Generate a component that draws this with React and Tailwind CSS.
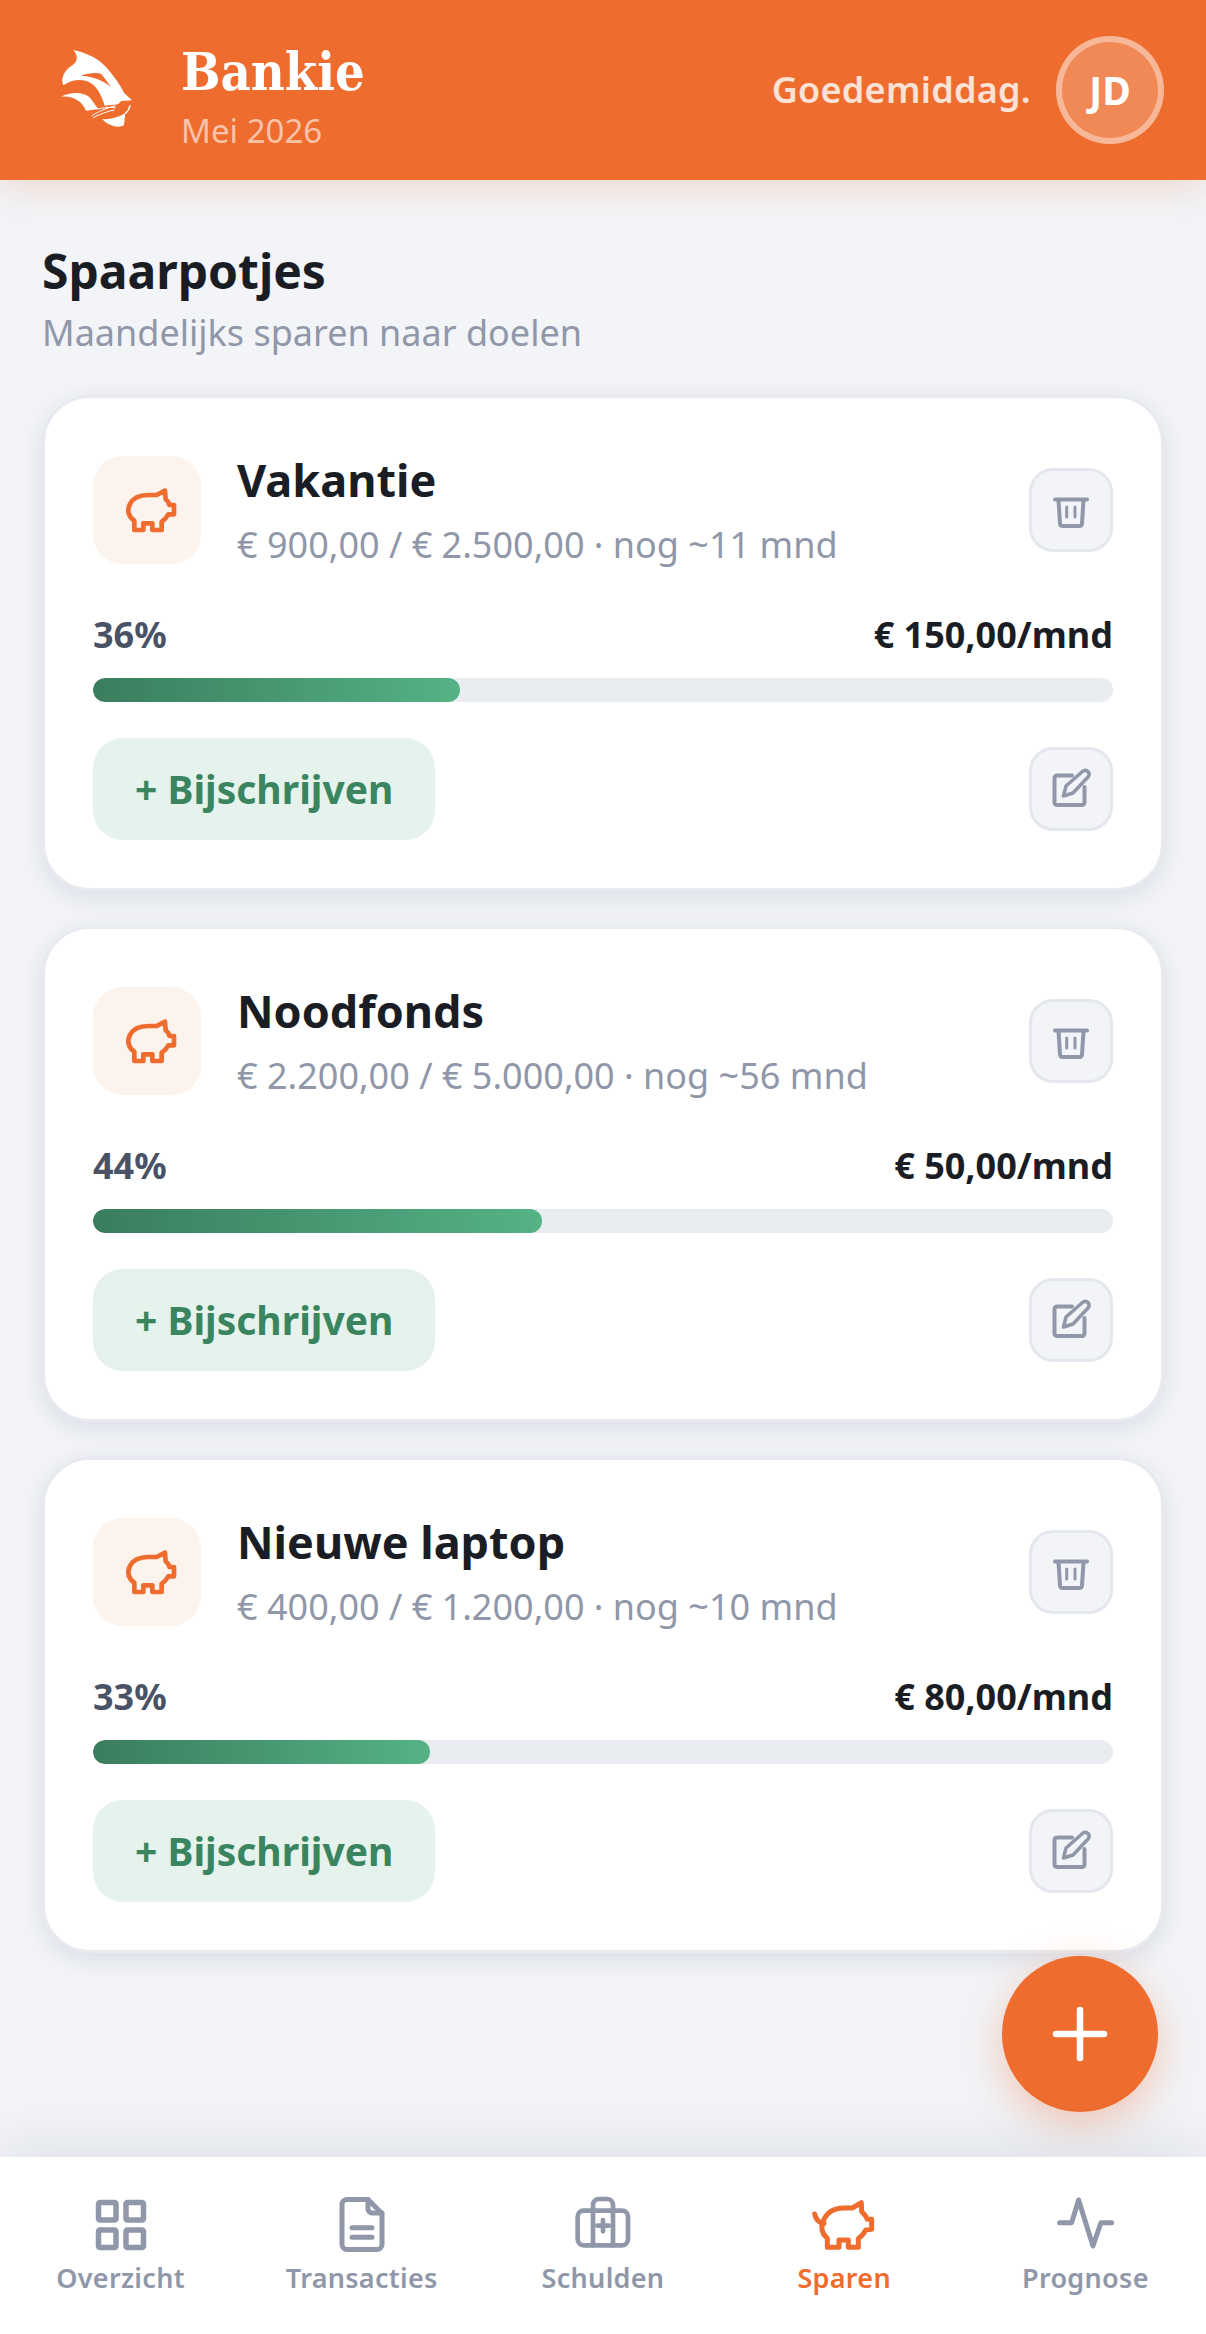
const orange = 'text-[#ee6c2d]';

const potjes = [
  { name: 'Vakantie', detail: '€ 900,00 / € 2.500,00 · nog ~11 mnd', pct: 36, monthly: '€ 150,00/mnd' },
  { name: 'Noodfonds', detail: '€ 2.200,00 / € 5.000,00 · nog ~56 mnd', pct: 44, monthly: '€ 50,00/mnd' },
  { name: 'Nieuwe laptop', detail: '€ 400,00 / € 1.200,00 · nog ~10 mnd', pct: 33, monthly: '€ 80,00/mnd' },
];

function Logo() {
  return (
    <svg width="80" height="90" viewBox="0 0 240 270" className="shrink-0">
      <path fill="#fff" d="M52 15 C85 22 115 35 135 52 C165 80 190 115 205 145 L228 166 L196 168 L186 178 L146 182 C138 155 125 128 105 115 C82 100 50 102 22 121 C15 105 20 85 38 68 C62 55 72 38 52 15 Z" />
      <path fill="#ee6c2d" d="M75 92 C95 84 120 82 135 86 L146 100 L165 126 C145 108 115 95 75 92 Z" />
      <path fill="#fff" d="M15 155 C45 140 80 140 100 156 C112 170 120 185 128 192 L90 197 C80 175 60 152 15 155 Z" />
      <path fill="#fff" d="M138 222 C160 225 185 218 208 205 L204 240 C190 250 160 245 138 222 Z" />
      <path fill="none" stroke="#fff" strokeWidth="3" strokeLinecap="round" d="M108 212 C125 200 150 190 178 182 M112 218 C130 208 155 198 175 195 M125 192 C140 188 160 186 178 188" />
      <path fill="none" stroke="#fff" strokeWidth="4" strokeLinecap="round" d="M222 182 C220 192 215 200 208 205" />
    </svg>
  );
}

function CardPig() {
  return (
    <svg width="70" height="60" viewBox="-9 0 210 180" fill="none" stroke="currentColor" strokeWidth="14" strokeLinejoin="round" strokeLinecap="round">
      <path d="M58 150 L58 122 C40 110 35 90 45 72 C55 52 75 45 100 45 L125 45 L150 32 L152 58 C158 62 162 68 163 75 L177 75 L177 103 L160 103 C155 112 148 120 140 125 L140 150 L112 150 L112 130 L85 130 L85 150 Z" />
    </svg>
  );
}

function TrashIcon() {
  return (
    <svg width="48" height="48" viewBox="0 0 48 48" fill="none" stroke="#8f97a8" strokeLinecap="round" strokeLinejoin="round">
      <path strokeWidth="4" d="M8 13.5 H40" />
      <path strokeWidth="4" d="M11.5 14 L13 37.5 a2.5 2.5 0 0 0 2.5 2.5 H32.5 a2.5 2.5 0 0 0 2.5 -2.5 L36.5 14" />
      <path strokeWidth="3" d="M19.7 21 V31 M28 21 V31" />
    </svg>
  );
}

function EditIcon() {
  return (
    <svg width="48" height="48" viewBox="0 0 48 48" fill="none" stroke="#8f97a8" strokeLinecap="round" strokeLinejoin="round">
      <path strokeWidth="4" d="M25 10.5 H10 a2.5 2.5 0 0 0 -2.5 2.5 V37.5 a2.5 2.5 0 0 0 2.5 2.5 H35 a2.5 2.5 0 0 0 2.5 -2.5 V22" />
      <path strokeWidth="3.5" d="M16.5 31 L19 21 L36 6 Q39 4.5 41 6.5 Q43 8.5 41.5 11.5 L26 28 Z" />
    </svg>
  );
}

function SquareButton({ children }) {
  return (
    <button className="w-[84px] h-[84px] shrink-0 flex items-center justify-center rounded-[24px] border-[3px] border-[#e5e7ee] bg-[#f2f4f8]">
      {children}
    </button>
  );
}

function PotCard({ name, detail, pct, monthly }) {
  return (
    <div className="rounded-[48px] border-[3px] border-[#e8eaf0] bg-white px-[48px] pt-[52px] pb-[48px] shadow-[0_6px_24px_rgba(30,40,70,0.11)]">
      <div className="flex items-center gap-[36px]">
        <div className={`w-[108px] h-[108px] shrink-0 flex items-center justify-center rounded-[30px] bg-[#fcf3ec] ${orange}`}>
          <CardPig />
        </div>
        <div className="flex-1 min-w-0">
          <div className="text-[45px] leading-[60px] font-bold text-[#1a1d24]">{name}</div>
          <div className="mt-[11px] text-[36px] leading-[48px] text-[#8f97a8]">{detail}</div>
        </div>
        <SquareButton><TrashIcon /></SquareButton>
      </div>

      <div className="mt-[42px] flex justify-between text-[36px] leading-[48px] font-bold">
        <span className="text-[#4a5266]">{pct}%</span>
        <span className="text-[#1a1d24]">{monthly}</span>
      </div>

      <div className="mt-[19px] h-[24px] rounded-[12px] bg-[#e9ecf0] overflow-hidden">
        <div className="h-full rounded-[12px] bg-gradient-to-r from-[#3a7d5e] to-[#54b384]" style={{ width: `${pct}%` }}></div>
      </div>

      <div className="mt-[36px] flex items-center justify-between">
        <button className="h-[102px] px-[42px] rounded-[30px] bg-[#e5f3ec] text-[39px] font-bold text-[#3a8560]">+ Bijschrijven</button>
        <SquareButton><EditIcon /></SquareButton>
      </div>
    </div>
  );
}

function NavIcon({ name }) {
  if (name === 'grid') {
    return (
      <svg width="60" height="60" viewBox="0 0 60 60" fill="none" stroke="currentColor" strokeWidth="5.5" strokeLinejoin="round">
        <rect x="7.5" y="7.5" width="17.5" height="17.5" rx="1.5" />
        <rect x="35" y="7.5" width="17.5" height="17.5" rx="1.5" />
        <rect x="7.5" y="35" width="17.5" height="17.5" rx="1.5" />
        <rect x="35" y="35" width="17.5" height="17.5" rx="1.5" />
      </svg>
    );
  }
  if (name === 'file') {
    return (
      <svg width="60" height="60" viewBox="0 0 60 60" fill="none" stroke="currentColor" strokeWidth="5" strokeLinecap="round" strokeLinejoin="round">
        <path d="M36 4.5 H15 a5 5 0 0 0 -5 5 V49.5 a5 5 0 0 0 5 5 H45 a5 5 0 0 0 5 -5 V18.5 Z" />
        <path d="M36 4.5 V14 a4 4 0 0 0 4 4 H50" />
        <path d="M20 32.7 H40 M20 42.3 H40" />
      </svg>
    );
  }
  if (name === 'case') {
    return (
      <svg width="90" height="70" viewBox="-5 0 270 210" fill="none" stroke="currentColor" strokeWidth="14" strokeLinecap="round" strokeLinejoin="round">
        <rect x="54" y="62" width="151" height="104" rx="18" />
        <path d="M100 166 V45 a18 18 0 0 1 18 -18 H142 a18 18 0 0 1 18 18 V166" />
        <path d="M130 90 V124 M113 107 H147" />
      </svg>
    );
  }
  if (name === 'pig') {
    return (
      <svg width="90" height="70" viewBox="0 0 270 210" fill="none" stroke="currentColor" strokeWidth="15" strokeLinecap="round" strokeLinejoin="round">
        <path d="M85 172 L85 145 C70 132 64 115 72 95 C82 68 105 54 135 54 L160 54 L187 38 L188 65 C196 72 202 80 205 88 L218 88 L218 118 L200 120 C195 130 187 140 178 146 L178 172 L148 172 L148 150 L120 150 L120 172 Z" />
        <path d="M47 72 C50 88 58 98 75 100" />
      </svg>
    );
  }
  return (
    <svg width="90" height="70" viewBox="0 0 90 70" fill="none" stroke="currentColor" strokeWidth="5" strokeLinecap="round" strokeLinejoin="round">
      <path d="M19.6 32.7 H31.6 L38.6 10 L53 56 L60.9 32.7 H71.6" />
    </svg>
  );
}

const navItems = [
  { label: 'Overzicht', icon: 'grid' },
  { label: 'Transacties', icon: 'file' },
  { label: 'Schulden', icon: 'case' },
  { label: 'Sparen', icon: 'pig', active: true },
  { label: 'Prognose', icon: 'pulse' },
];

export default function App() {
  return (
    <div className="h-[2334px] w-full flex flex-col overflow-hidden bg-[#f2f4f8] font-['Noto_Sans',sans-serif]">
      <header className="relative z-10 h-[180px] shrink-0 flex items-center justify-between pl-[56px] pr-[42px] bg-[#ee6c2d] shadow-[0_6px_36px_rgba(238,108,45,0.22)]">
        <div className="flex items-center gap-[45px]">
          <Logo />
          <div className="pt-[15px]">
            <div className="font-['DejaVu_Serif_Condensed','DejaVu_Serif',serif] text-[52px] leading-[58px] font-bold text-white">Bankie</div>
            <div className="mt-[9px] text-[33px] leading-[42px] text-white/60">Mei 2026</div>
          </div>
        </div>
        <div className="flex items-center gap-[25px]">
          <span className="text-[36px] font-semibold tracking-[0.25px] text-white/80">Goedemiddag.</span>
          <div className="w-[108px] h-[108px] rounded-full border-[6px] border-white/40 bg-white/20 flex items-center justify-center text-[39px] font-bold text-white">JD</div>
        </div>
      </header>

      <main className="relative flex-1 min-h-0 px-[42px] pt-[61px]">
        <h1 className="text-[48px] leading-[60px] font-bold text-[#1a1d24]">Spaarpotjes</h1>
        <p className="mt-[8px] text-[36px] leading-[48px] text-[#8f97a8]">Maandelijks sparen naar doelen</p>
        <div className="mt-[38px] flex flex-col gap-[35px]">
          {potjes.map((p) => <PotCard key={p.name} {...p} />)}
        </div>
        <button className="absolute right-[48px] bottom-[45px] w-[156px] h-[156px] rounded-full bg-[#ee6c2d] flex items-center justify-center shadow-[0_12px_42px_rgba(238,108,45,0.35)]">
          <svg width="60" height="60" viewBox="0 0 60 60" fill="none" stroke="#fff" strokeWidth="6.5" strokeLinecap="round">
            <path d="M30 6 V54 M6 30 H54" />
          </svg>
        </button>
      </main>

      <nav className="relative z-10 h-[177px] shrink-0 grid grid-cols-5 bg-white pt-[33px] shadow-[0_-6px_60px_rgba(20,30,60,0.1)]">
        {navItems.map((item) => (
          <div key={item.label} className={`flex flex-col items-center ${item.active ? 'text-[#ee6c2d]' : 'text-[#8f97a8]'}`}>
            <div className="h-[70px] flex items-center justify-center">
              <NavIcon name={item.icon} />
            </div>
            <span className="text-[27px] leading-[36px] font-semibold tracking-[0.3px]">{item.label}</span>
          </div>
        ))}
      </nav>
    </div>
  );
}
